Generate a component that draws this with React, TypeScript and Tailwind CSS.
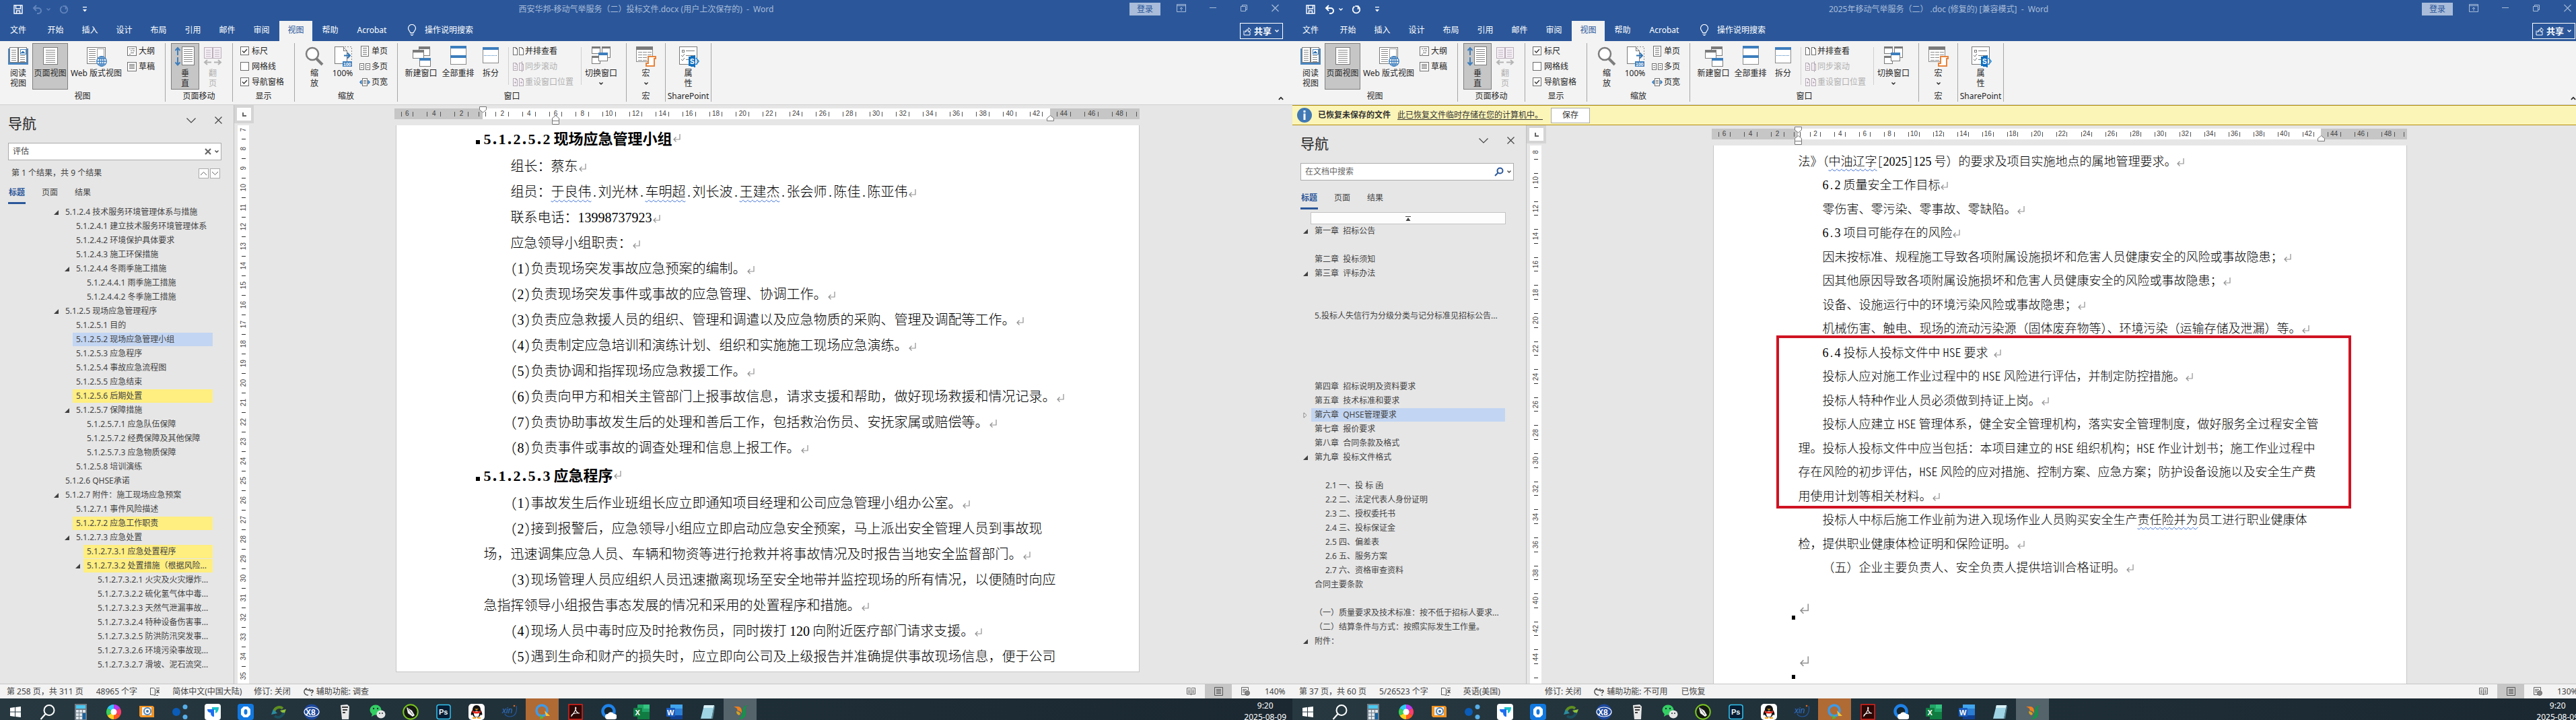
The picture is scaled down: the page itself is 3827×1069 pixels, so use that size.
import type { ReactNode } from "react";
import { clsx } from "clsx";

/* ---------- shared types ---------- */

type TreeItem = {
  label: string;
  level: number;
  state?: "open" | "closed";
  mark?: "selected" | "hit";
};

// text between two "~" carries the proofing underline
type DocLine = {
  text: string;
  kind?: "heading" | "flush";
  end?: boolean;
};

/* ---------- data ---------- */

const leftTree: TreeItem[] = [
  { label: "5.1.2.4 技术服务环境管理体系与措施", level: 0, state: "open" },
  { label: "5.1.2.4.1 建立技术服务环境管理体系", level: 1 },
  { label: "5.1.2.4.2 环境保护具体要求", level: 1 },
  { label: "5.1.2.4.3 施工环保措施", level: 1 },
  { label: "5.1.2.4.4 冬雨季施工措施", level: 1, state: "open" },
  { label: "5.1.2.4.4.1 雨季施工措施", level: 2 },
  { label: "5.1.2.4.4.2 冬季施工措施", level: 2 },
  { label: "5.1.2.5 现场应急管理程序", level: 0, state: "open" },
  { label: "5.1.2.5.1 目的", level: 1 },
  { label: "5.1.2.5.2 现场应急管理小组", level: 1, mark: "selected" },
  { label: "5.1.2.5.3 应急程序", level: 1 },
  { label: "5.1.2.5.4 事故应急流程图", level: 1 },
  { label: "5.1.2.5.5 应急结束", level: 1 },
  { label: "5.1.2.5.6 后期处置", level: 1, mark: "hit" },
  { label: "5.1.2.5.7 保障措施", level: 1, state: "open" },
  { label: "5.1.2.5.7.1 应急队伍保障", level: 2 },
  { label: "5.1.2.5.7.2 经费保障及其他保障", level: 2 },
  { label: "5.1.2.5.7.3 应急物质保障", level: 2 },
  { label: "5.1.2.5.8 培训演练", level: 1 },
  { label: "5.1.2.6 QHSE承诺", level: 0 },
  { label: "5.1.2.7 附件：施工现场应急预案", level: 0, state: "open" },
  { label: "5.1.2.7.1 事件风险描述", level: 1 },
  { label: "5.1.2.7.2 应急工作职责", level: 1, mark: "hit" },
  { label: "5.1.2.7.3 应急处置", level: 1, state: "open" },
  { label: "5.1.2.7.3.1 应急处置程序", level: 2, mark: "hit" },
  { label: "5.1.2.7.3.2 处置措施（根据风险...", level: 2, state: "open", mark: "hit" },
  { label: "5.1.2.7.3.2.1 火灾及火灾爆炸...", level: 3 },
  { label: "5.1.2.7.3.2.2 硫化氢气体中毒...", level: 3 },
  { label: "5.1.2.7.3.2.3 天然气泄漏事故...", level: 3 },
  { label: "5.1.2.7.3.2.4 特种设备伤害事...", level: 3 },
  { label: "5.1.2.7.3.2.5 防洪防汛突发事...", level: 3 },
  { label: "5.1.2.7.3.2.6 环境污染事故现...", level: 3 },
  { label: "5.1.2.7.3.2.7 滑坡、泥石流突...", level: 3 },
];

const blank: TreeItem = { label: "", level: 0 };

const rightTree: TreeItem[] = [
  { label: "第一章  招标公告", level: 0, state: "open" },
  blank,
  { label: "第二章  投标须知", level: 0 },
  { label: "第三章  评标办法", level: 0, state: "open" },
  blank,
  blank,
  { label: "5.投标人失信行为分级分类与记分标准见招标公告...", level: 0 },
  blank,
  blank,
  blank,
  blank,
  { label: "第四章  招标说明及资料要求", level: 0 },
  { label: "第五章  技术标准和要求", level: 0 },
  { label: "第六章  QHSE管理要求", level: 0, state: "closed", mark: "selected" },
  { label: "第七章  报价要求", level: 0 },
  { label: "第八章  合同条款及格式", level: 0 },
  { label: "第九章  投标文件格式", level: 0, state: "open" },
  blank,
  { label: "2.1 一、投 标 函", level: 1 },
  { label: "2.2 二、法定代表人身份证明", level: 1 },
  { label: "2.3 二、授权委托书", level: 1 },
  { label: "2.4 三、投标保证金", level: 1 },
  { label: "2.5 四、偏差表", level: 1 },
  { label: "2.6 五、服务方案", level: 1 },
  { label: "2.7 六、资格审查资料", level: 1 },
  { label: "合同主要条款", level: 0 },
  blank,
  { label: "（一）质量要求及技术标准：按不低于招标人要求...", level: 0 },
  { label: "（二）结算条件与方式：按照实际发生工作量。", level: 0 },
  { label: "附件：", level: 0, state: "open" },
];

const leftLines: DocLine[] = [
  { text: "5.1.2.5.2 现场应急管理小组", kind: "heading", end: true },
  { text: "组长：蔡东", end: true },
  { text: "组员：~于良伟~.刘光林.~车明超~.刘长波.~王建杰~.张会师.陈佳.陈亚伟", end: true },
  { text: "联系电话：13998737923", end: true },
  { text: "应急领导小组职责：", end: true },
  { text: "(1)负责现场突发事故应急预案的编制。", end: true },
  { text: "(2)负责现场突发事件或事故的应急管理、协调工作。", end: true },
  { text: "(3)负责应急救援人员的组织、管理和调遣以及应急物质的采购、管理及调配等工作。", end: true },
  { text: "(4)负责制定应急培训和演练计划、组织和实施施工现场应急演练。", end: true },
  { text: "(5)负责协调和指挥现场应急救援工作。", end: true },
  { text: "(6)负责向甲方和相关主管部门上报事故信息，请求支援和帮助，做好现场救援和情况记录。", end: true },
  { text: "(7)负责协助事故发生后的处理和善后工作，包括救治伤员、安抚家属或赔偿等。", end: true },
  { text: "(8)负责事件或事故的调查处理和信息上报工作。", end: true },
  { text: "5.1.2.5.3 应急程序", kind: "heading", end: true },
  { text: "(1)事故发生后作业班组长应立即通知项目经理和公司应急管理小组办公室。", end: true },
  { text: "(2)接到报警后，应急领导小组应立即启动应急安全预案，马上派出安全管理人员到事故现" },
  { text: "场，迅速调集应急人员、车辆和物资等进行抢救并将事故情况及时报告当地安全监督部门。", kind: "flush", end: true },
  { text: "(3)现场管理人员应组织人员迅速撤离现场至安全地带并监控现场的所有情况，以便随时向应" },
  { text: "急指挥领导小组报告事态发展的情况和采用的处置程序和措施。", kind: "flush", end: true },
  { text: "(4)现场人员中毒时应及时抢救伤员，同时拨打 120 向附近医疗部门请求支援。", end: true },
  { text: "(5)遇到生命和财产的损失时，应立即向公司及上级报告并准确提供事故现场信息，便于公司" },
];

const rightLines: DocLine[] = [
  { text: "法》（~中油辽字~[2025]125 号）的要求及项目实施地点的属地管理要求。", kind: "flush", end: true },
  { text: "6.2 质量安全工作目标", end: true },
  { text: "零伤害、零污染、零事故、零缺陷。", end: true },
  { text: "6.3 项目可能存在的风险", end: true },
  { text: "因未按标准、规程施工导致各项附属设施损坏和危害人员健康安全的风险或事故隐患；", end: true },
  { text: "因其他原因导致各项附属设施损坏和危害人员健康安全的风险或事故隐患；", end: true },
  { text: "设备、设施运行中的环境污染风险或事故隐患；", end: true },
  { text: "机械伤害、触电、现场的流动污染源（固体废弃物等）、环境污染（运输存储及泄漏）等。", end: true },
  { text: "6.4 投标人投标文件中 HSE 要求  ", end: true },
  { text: "投标人应对施工作业过程中的 HSE 风险进行评估，并制定防控措施。", end: true },
  { text: "投标人特种作业人员必须做到持证上岗。", end: true },
  { text: "投标人应建立 HSE 管理体系，健全安全管理机构，落实安全管理制度，做好服务全过程安全管" },
  { text: "理。投标人投标文件中应当包括：本项目建立的 HSE 组织机构；HSE 作业计划书；施工作业过程中", kind: "flush" },
  { text: "存在风险的初步评估，HSE 风险的应对措施、控制方案、应急方案；防护设备设施以及安全生产费", kind: "flush" },
  { text: "用使用计划等相关材料。", kind: "flush", end: true },
  { text: "投标人中标后施工作业前为进入现场作业人员购买安全生产~责任险并为~员工进行职业健康体" },
  { text: "检，提供职业健康体检证明和保险证明。", kind: "flush", end: true },
  { text: "（五）企业主要负责人、安全负责人提供培训合格证明。", end: true },
];

/* ---------- small glyphs ---------- */

function Caret({ className }: { className?: string }) {
  return (
    <svg viewBox="0 0 8 8" className={clsx("shrink-0", className || "size-2")} fill="none" stroke="currentColor" strokeWidth="1.4">
      <path d="M1.5 2.5 4 5l2.500-2.500" />
    </svg>
  );
}

function ReturnMark({ className }: { className?: string }) {
  return (
    <svg
      viewBox="0 0 12 16"
      className={clsx("inline-block align-middle text-[#909090]", className || "h-4 w-3")}
      fill="none"
      stroke="currentColor"
      strokeWidth="1.200"
    >
      <path d="M11 2v8H2M5.500 6.500 2 10l3.500 3.500" />
    </svg>
  );
}

function LineRows({ x, y, w, n, gap, color = "#8a8a8a" }: { x: number; y: number; w: number; n: number; gap: number; color?: string }) {
  return (
    <>
      {Array.from({ length: n }, (_, i) => (
        <path key={i} d={`M${x} ${y + i * gap + 0.5}h${w}`} stroke={color} strokeWidth="1" />
      ))}
    </>
  );
}

/* ---------- ribbon icons, 32px ---------- */

function Big({ children }: { children: ReactNode }) {
  return (
    <svg viewBox="0 0 32 32" className="size-8 shrink-0" fill="none" shapeRendering="crispEdges">
      {children}
    </svg>
  );
}

const ReadIcon = () => (
  <Big>
    <path d="M1 4h4v20h22V4h4v24H1z" fill="#4a86c0" />
    <path d="M3.500 2.500h12v22h-12zM16.500 2.500h12v22h-12z" fill="#fff" stroke="#7a7a7a" />
    <LineRows x={6} y={6} w={7} n={6} gap={3} />
    <LineRows x={19} y={14} w={7} n={4} gap={3} />
    <path d="M19 5h8v7h-8z" fill="#fff" stroke="#4a86c0" />
    <path d="m20 11 3-4 3 4z" fill="#2f6fb0" />
  </Big>
);

const PageIcon = () => (
  <Big>
    <path d="M5.500 2.500h21v25h-21z" fill="#fff" stroke="#7a7a7a" />
    <LineRows x={9} y={6} w={14} n={7} gap={3} />
  </Big>
);

const WebIcon = () => (
  <Big>
    <path d="M2.500 2.500h27v24h-27z" fill="#fff" stroke="#7a7a7a" />
    <LineRows x={5} y={5} w={10} n={7} gap={3} />
    <path d="M17.500 4.500h10v13h-10z" fill="#fff" stroke="#9a9a9a" />
    <g shapeRendering="auto" stroke="#3d7ebd" strokeWidth="1.300">
      <circle cx="24" cy="23" r="7.300" fill="#fff" />
      <ellipse cx="24" cy="23" rx="3.300" ry="7.300" />
      <path d="M17 23h14M18 19h12M18 27h12M24 16v14" />
    </g>
  </Big>
);

const VerticalIcon = () => (
  <Big>
    <g shapeRendering="auto" stroke="#3d7ebd" strokeWidth="2">
      <path d="M5 3v11M1.500 7 5 3l3.500 4M5 17v11M1.500 24.500 5 28.500l3.500-4" />
    </g>
    <path d="M11.500 1.500h18v27h-18z" fill="#fff" stroke="#7a7a7a" />
    <LineRows x={14} y={5} w={13} n={7} gap={3} />
  </Big>
);

const FlipIcon = () => (
  <Big>
    <path d="M3.500 2.500h12v16h-12zM16.500 2.500h12v16h-12z" fill="#f5eef5" stroke="#b9aeb9" />
    <LineRows x={6} y={6} w={7} n={4} gap={3} color="#c3b9c3" />
    <LineRows x={19} y={6} w={7} n={4} gap={3} color="#c3b9c3" />
    <g shapeRendering="auto" stroke="#b5b5b5" strokeWidth="2">
      <path d="M4 24.500h10M8 21l-4 3.500L8 28M18 24.500h10M24 21l4 3.500-4 3.500" />
    </g>
  </Big>
);

const ZoomIcon = () => (
  <Big>
    <g shapeRendering="auto">
      <circle cx="13" cy="12" r="9" fill="#fff" stroke="#7d7d7d" strokeWidth="2.500" />
      <path d="m19 19 9 9" stroke="#7d7d7d" strokeWidth="4" />
    </g>
  </Big>
);

const HundredIcon = () => (
  <Big>
    <path d="M4 1.500h13l5 6v19H4z" fill="#fff" stroke="#7a7a7a" />
    <path d="M17 1.500v6h5" stroke="#7a7a7a" />
    <path d="M19 1.500h10.500v22" stroke="#8a8a8a" strokeDasharray="2 2" />
    <path d="M18 14.500h9M23 10.500l4 4-4 4" stroke="#2f75b5" strokeWidth="2" shapeRendering="auto" />
    <path d="M16 23h14v8H16z" fill="#3d7ebd" />
    <text x="17" y="30" fontSize="7" fill="#fff" fontWeight="700" fontFamily="Liberation Sans">
      100
    </text>
  </Big>
);

const NewWindowIcon = () => (
  <Big>
    <path d="M12.500 1.500h16v13h-16z" fill="#fff" stroke="#7a7a7a" />
    <path d="M12 1h17v4H12z" fill="#7a7a7a" />
    <path d="M3.500 6.500h16v12h-16z" fill="#fff" stroke="#7a7a7a" />
    <path d="M3 6h17v4H3z" fill="#7a7a7a" />
    <path d="M13.500 18.500h16v12h-16z" fill="#fff" stroke="#7a7a7a" />
    <path d="M13 18h17v4H13z" fill="#3d7ebd" />
  </Big>
);

const ArrangeIcon = () => (
  <Big>
    <path d="M4.500 1.500h23v26h-23z" fill="#fff" stroke="#8a8a8a" />
    <path d="M4 0h24v4H4zM4 14h24v4H4z" fill="#3d7ebd" />
  </Big>
);

const SplitIcon = () => (
  <Big>
    <path d="M4.500 2.500h23v23h-23z" fill="#fff" stroke="#8a8a8a" />
    <path d="M4 2h24v4H4z" fill="#3d7ebd" />
    <path d="M6 14.500h20" stroke="#3d7ebd" strokeDasharray="1 1" />
  </Big>
);

const SwitchIcon = () => (
  <Big>
    <path d="M2.500 1.500h12v10h-12zM17.500 1.500h12v16h-12z" fill="#fff" stroke="#7a7a7a" />
    <path d="M2 1h13v3H2zM17 1h13v3H17z" fill="#7a7a7a" />
    <path d="M2.500 15.500h12v11h-12z" fill="#fff" stroke="#7a7a7a" />
    <path d="M2 15h13v3H2z" fill="#7a7a7a" />
    <path d="M12.500 10.500h13v12h-13z" fill="#fff" stroke="#7a7a7a" />
    <path d="M12 10h14v4H12z" fill="#3d7ebd" />
  </Big>
);

const MacroIcon = () => (
  <Big>
    <path d="M1.500 1.500h24v22h-24z" fill="#fff" stroke="#8a8a8a" />
    <path d="M1 1h25v5H1z" fill="#7a7a7a" />
    <g strokeDasharray="6 1">
      <LineRows x={4} y={9} w={20} n={4} gap={4} />
    </g>
    <path d="M19 16h11v3h-2v11H16v-4h3z" fill="#fff" stroke="#e8833a" strokeWidth="2" shapeRendering="auto" />
  </Big>
);

const PropsIcon = () => (
  <Big>
    <path d="M2.500 1.500h26v26h-26z" fill="#fff" stroke="#7a7a7a" />
    <path d="M6 6h3v3H6zM12 7.500h13M12 14.500h13M12 20.500h5" stroke="#7a7a7a" />
    <path d="m5 14 2 2 3-4M5 20l2 2 3-4" stroke="#7a7a7a" shapeRendering="auto" />
    <path d="M16 16l10-2v18l-10-2z" fill="#0f6fc0" />
    <path d="M27 18l4 5-4 5" stroke="#2f8fd8" strokeWidth="2" shapeRendering="auto" />
    <text x="18" y="27" fontSize="10" fill="#fff" fontWeight="700" fontFamily="Liberation Sans">
      S
    </text>
  </Big>
);

/* ---------- ribbon icons, 16px ---------- */

function Small({ children, faded }: { children: ReactNode; faded?: boolean }) {
  return (
    <svg viewBox="0 0 16 16" className={clsx("size-4 shrink-0", faded ? "text-[#b5adb5]" : "text-[#6f6f6f]")} fill="none" stroke="currentColor" shapeRendering="crispEdges">
      {children}
    </svg>
  );
}

const OutlineIcon = () => (
  <Small>
    <path d="M1.500 1.500h13v13h-13z" fill="#fff" />
    <path d="M4 4.500h2M7 4.500h5M6 7.500h2M9 7.500h3M6 10.500h5M4 12.500h2" />
  </Small>
);
const DraftIcon = () => (
  <Small>
    <path d="M1.500 1.500h13v13h-13z" fill="#fff" />
    <path d="M4 4.500h8M4 6.500h8M4 8.500h8M4 10.500h8" />
  </Small>
);
const OnePageIcon = () => (
  <Small>
    <path d="M2.500.5h11v15h-11z" fill="#fff" />
    <path d="M5 3.500h6M5 6.500h6M5 9.500h6M5 12.500h6" />
  </Small>
);
const MultiPageIcon = () => (
  <Small>
    <path d="M.5 3.500h6v9h-6zM9.500 3.500h6v9h-6z" fill="#fff" />
    <path d="M2 6.500h3M2 9.500h3M11 6.500h3M11 9.500h3" />
  </Small>
);
const PageWidthIcon = () => (
  <Small>
    <path d="M4.500 2.500h7v11h-7z" fill="#fff" />
    <path d="M6 5.500h4M6 7.500h4M6 9.500h4" />
    <path d="M3 5 .5 8 3 11zM13 5l2.500 3-2.500 3z" fill="#3d7ebd" stroke="#3d7ebd" shapeRendering="auto" />
  </Small>
);
const SideBySideIcon = ({ variant = 0 }: { variant?: number }) => (
  <Small faded={variant > 0}>
    <path d="M.5 2.500h4l2 2v9h-6zM9.500 2.500h4l2 2v9h-6z" fill={variant ? "#f5eef5" : "#fff"} />
    <path d="M4.500 2.500v2h2M13.500 2.500v2h2" />
    {variant === 1 && <path d="M13.500 0v16M2 7.500h3M2 10.500h3" />}
    {variant === 2 && <path d="M2 8.500h3M11 8.500h3M3.500 7v3M12.500 7v3" />}
  </Small>
);

/* ---------- title bar and tabs ---------- */

const tabNames = ["开始", "插入", "设计", "布局", "引用", "邮件", "审阅", "视图", "帮助"];

function TitleBar({ title, canUndo }: { title: string; canUndo: boolean }) {
  const historyColor = canUndo ? "text-white" : "text-[#6385bd]";
  return (
    <div className="grid h-[31px] shrink-0 grid-cols-[1fr_auto_1fr] bg-[#2b579a] text-[#a9bcd9]">
      <div className="flex items-center pb-1 pl-5">
        <button aria-label="保存" className="text-white">
          <svg viewBox="0 0 14 14" className="size-3.5" fill="none" stroke="currentColor" strokeWidth="1.400">
            <path d="M1 1h12v12H1zM3.500 1v5h7V1M4.500 13V9h5v4" />
          </svg>
        </button>
        <button aria-label="撤消" className={clsx("ml-3.5 flex items-center gap-1", historyColor)}>
          <svg viewBox="0 0 16 16" className="size-4" fill="none" stroke="currentColor" strokeWidth="2">
            <path d="M6 2 2 6l4 4M2.500 6H9a4 4 0 0 1 0 8H7" />
          </svg>
          <Caret />
        </button>
        <button aria-label="恢复" className={clsx("ml-3", historyColor)}>
          <svg viewBox="0 0 16 16" className="size-3.5" fill="none" stroke="currentColor" strokeWidth="2">
            <path d="M5 3a6 6 0 1 0 6 0M11 8V2.500H6" />
          </svg>
        </button>
        <button aria-label="自定义快速访问工具栏" className="ml-5 text-white">
          <svg viewBox="0 0 8 8" className="size-2" fill="currentColor">
            <path d="M1 0h6v1.300H1zM1 4h6L4 7.500z" />
          </svg>
        </button>
      </div>
      <div className="whitespace-pre pt-1.5 text-[12px] leading-4">{title}</div>
      <div className="flex items-start justify-end">
        <button className="mt-1 h-[19px] w-[46px] bg-[#a9bcd9] text-[12px] leading-[19px] text-[#2b579a]">登录</button>
        <button aria-label="功能区显示选项" className="ml-6 mt-1.5">
          <svg viewBox="0 0 14 12" className="h-3 w-3.5" fill="none" stroke="currentColor">
            <path d="M.5.5h13v11H.5zM.5 2.500h13M7 10V5M5 7l2-2 2 2" />
          </svg>
        </button>
        <button aria-label="最小化" className="ml-[35px] mt-1.5">
          <svg viewBox="0 0 10 12" className="h-3 w-2.5" stroke="currentColor">
            <path d="M0 5.500h10" />
          </svg>
        </button>
        <button aria-label="还原" className="ml-9 mt-1.5">
          <svg viewBox="0 0 11 12" className="h-3 w-[11px]" fill="none" stroke="currentColor">
            <path d="M.5 3.500h7v7h-7zM2.500 3V1.500h7v7H8" />
          </svg>
        </button>
        <button aria-label="关闭" className="ml-[35px] mr-5 mt-1.5">
          <svg viewBox="0 0 11 12" className="h-3 w-[11px]" stroke="currentColor" strokeWidth="1.200">
            <path d="m.5 1 10 10M10.500 1l-10 10" />
          </svg>
        </button>
      </div>
    </div>
  );
}

function TabBar() {
  return (
    <div className="flex h-[30px] shrink-0 bg-[#2b579a] text-[12px] leading-[27px] text-white">
      <button className="mr-[3px] w-[54px] pb-[3px]">文件</button>
      {tabNames.map((name) => (
        <button
          key={name}
          className={clsx("pb-[3px]", name === "视图" ? "mx-px w-[49px] bg-[#f3f3f3] text-[#2b579a]" : "w-[51px]")}
        >
          {name}
        </button>
      ))}
      <button className="w-[73px] pb-[3px]">Acrobat</button>
      <button className="ml-4 flex items-center gap-3 pb-[3px]">
        <svg viewBox="0 0 14 18" className="h-[18px] w-3.5" fill="none" stroke="currentColor" strokeWidth="1.200">
          <path d="M4.500 12.500c0-2-3-3-3-6.500a5.500 5.500 0 0 1 11 0c0 3.500-3 4.500-3 6.500zM4.500 14.500h5M5.500 16.500h3" />
        </svg>
        操作说明搜索
      </button>
      <button className="ml-auto mr-3.5 mt-[3px] flex h-6 w-16 items-center justify-center gap-1 border border-white text-[13px] font-bold leading-5">
        <svg viewBox="0 0 12 14" className="h-3.5 w-3" fill="none" stroke="currentColor">
          <path d="M1 6.500v6.500h9V8M3 9c0-3 2-4.500 5-4.500V2l3.500 3.500L8 9V6.500C6 6.500 4 7 3 9z" />
        </svg>
        共享
        <Caret />
      </button>
    </div>
  );
}

/* ---------- ribbon ---------- */

function Group({ label, width, children }: { label: string; width: string; children: ReactNode }) {
  return (
    <div className={clsx("flex h-[87px] shrink-0 flex-col border-r border-[#a6a6a6]", width)}>
      <div className="flex h-[72px] items-start">{children}</div>
      <div className="whitespace-nowrap text-center leading-[17px]">{label}</div>
    </div>
  );
}

function BigButton({
  icon,
  lines,
  width,
  active,
  disabled,
  caret,
}: {
  icon: ReactNode;
  lines: string[];
  width: string;
  active?: boolean;
  disabled?: boolean;
  caret?: boolean;
}) {
  return (
    <button
      disabled={disabled}
      className={clsx(
        "flex h-[69px] shrink-0 flex-col items-center whitespace-nowrap border pt-[3px] leading-[15px]",
        width,
        active ? "border-[#7f7f7f] bg-[#c6c6c6]" : "border-transparent",
        disabled && "text-[#b1b1b1]",
      )}
    >
      {icon}
      <span className="mt-px">{lines[0]}</span>
      {lines[1] && <span>{lines[1]}</span>}
      {caret && <Caret className="mt-1 size-2" />}
    </button>
  );
}

function SmallButton({ icon, children, disabled }: { icon: ReactNode; children: ReactNode; disabled?: boolean }) {
  return (
    <button disabled={disabled} className={clsx("flex h-[23px] items-center gap-0.5 whitespace-nowrap", disabled && "text-[#b1b1b1]")}>
      {icon}
      {children}
    </button>
  );
}

function Check({ label, on }: { label: string; on?: boolean }) {
  return (
    <label className="flex h-[23px] items-center gap-1 whitespace-nowrap">
      <span className="grid size-[13px]">
        <input
          type="checkbox"
          defaultChecked={on}
          className="peer col-start-1 row-start-1 size-[13px] appearance-none border border-[#6b6b6b] bg-white"
        />
        <svg viewBox="0 0 13 13" className="pointer-events-none col-start-1 row-start-1 hidden size-[13px] peer-checked:block" fill="none" stroke="#333" strokeWidth="1.300">
          <path d="m3 6.500 2.500 2.500L10 4" />
        </svg>
      </span>
      {label}
    </label>
  );
}

function Ribbon() {
  return (
    <div className="flex h-[95px] shrink-0 border-b border-[#d0d0d0] bg-[#f3f3f3] pt-[3px] text-[12px] text-[#262626]">
      <Group label="视图" width="w-[246px]">
        <BigButton icon={<ReadIcon />} lines={["阅读", "视图"]} width="ml-1.5 w-[42px]" />
        <BigButton icon={<PageIcon />} lines={["页面视图"]} width="w-[53px]" active />
        <BigButton icon={<WebIcon />} lines={["Web 版式视图"]} width="w-[84px]" />
        <div className="pl-[3px]">
          <SmallButton icon={<OutlineIcon />}>大纲</SmallButton>
          <SmallButton icon={<DraftIcon />}>草稿</SmallButton>
        </div>
      </Group>
      <Group label="页面移动" width="w-[100px]">
        <BigButton icon={<VerticalIcon />} lines={["垂", "直"]} width="ml-2 w-[42px]" active />
        <BigButton icon={<FlipIcon />} lines={["翻", "页"]} width="w-10" disabled />
      </Group>
      <Group label="显示" width="w-[92px]">
        <div className="pl-[11px]">
          <Check label="标尺" on />
          <Check label="网格线" />
          <Check label="导航窗格" on />
        </div>
      </Group>
      <Group label="缩放" width="w-[153px]">
        <BigButton icon={<ZoomIcon />} lines={["缩", "放"]} width="ml-2 w-[42px]" />
        <BigButton icon={<HundredIcon />} lines={["100%"]} width="w-[42px]" />
        <div className="pl-1">
          <SmallButton icon={<OnePageIcon />}>单页</SmallButton>
          <SmallButton icon={<MultiPageIcon />}>多页</SmallButton>
          <SmallButton icon={<PageWidthIcon />}>页宽</SmallButton>
        </div>
      </Group>
      <Group label="窗口" width="w-[340px]">
        <BigButton icon={<NewWindowIcon />} lines={["新建窗口"]} width="ml-[7px] w-[55px]" />
        <BigButton icon={<ArrangeIcon />} lines={["全部重排"]} width="w-[55px]" />
        <BigButton icon={<SplitIcon />} lines={["拆分"]} width="w-[42px]" />
        <div className="ml-[5px] mt-1.5 h-14 border-l border-[#d0d0d0]" />
        <div className="pl-1.5">
          <SmallButton icon={<SideBySideIcon />}>并排查看</SmallButton>
          <SmallButton icon={<SideBySideIcon variant={1} />} disabled>
            同步滚动
          </SmallButton>
          <SmallButton icon={<SideBySideIcon variant={2} />} disabled>
            重设窗口位置
          </SmallButton>
        </div>
        <div className="ml-[11px] mt-1.5 h-14 border-l border-[#d0d0d0]" />
        <BigButton icon={<SwitchIcon />} lines={["切换窗口"]} width="w-[58px]" caret />
      </Group>
      <Group label="宏" width="w-[58px]">
        <BigButton icon={<MacroIcon />} lines={["宏"]} width="mx-auto w-10" caret />
      </Group>
      <Group label="SharePoint" width="w-[68px]">
        <BigButton icon={<PropsIcon />} lines={["属", "性"]} width="mx-auto w-10" />
      </Group>
      <button aria-label="折叠功能区" className="ml-auto mr-3 self-end pb-1">
        <Caret className="size-2.5 rotate-180" />
      </button>
    </div>
  );
}

/* ---------- navigation pane ---------- */

const indents = ["ml-0", "ml-4", "ml-8", "ml-12"];

function Tree({ items, className }: { items: TreeItem[]; className: string }) {
  return (
    <ul className={clsx("flex flex-col gap-px text-[12px] leading-5", className)}>
      {items.map((item, i) => (
        <li key={i} className={clsx("flex h-5 items-center", indents[item.level])}>
          <span className="w-4 shrink-0">
            {item.state === "open" && (
              <svg viewBox="0 0 7 7" className="ml-1 size-[7px]" fill="#404040">
                <path d="M7 0v7H0z" />
              </svg>
            )}
            {item.state === "closed" && (
              <svg viewBox="0 0 6 9" className="ml-1 h-[9px] w-1.5" fill="#fff" stroke="#808080">
                <path d="M1 .8v7.400l4-3.700z" />
              </svg>
            )}
          </span>
          <a
            href="#"
            className={clsx(
              "h-5 grow whitespace-pre pl-[5px]",
              item.mark === "selected" && "bg-[#c2d5f2]",
              item.mark === "hit" && "bg-[#ffee80]",
            )}
          >
            {item.label}
          </a>
        </li>
      ))}
    </ul>
  );
}

function NavPane({ query, tree, treeClass }: { query?: string; tree: TreeItem[]; treeClass: string }) {
  return (
    <aside className="flex w-[348px] shrink-0 flex-col overflow-hidden border-r border-[#c0c0c0] text-[#444]">
      <div className="flex items-start pl-3 pt-[13px]">
        <h2 className="text-[21px] leading-7 text-[#262626]">导航</h2>
        <button aria-label="窗格选项" className="ml-auto mt-1.5">
          <svg viewBox="0 0 14 8" className="h-2 w-3.5" fill="none" stroke="#444" strokeWidth="1.200">
            <path d="m.5.5 6.500 6.500L13.500.5" />
          </svg>
        </button>
        <button aria-label="关闭窗格" className="ml-7 mr-[17px] mt-1">
          <svg viewBox="0 0 11 11" className="size-[11px]" stroke="#444" strokeWidth="1.200">
            <path d="m.5.5 10 10M10.500.5l-10 10" />
          </svg>
        </button>
      </div>
      <div className="ml-3 mr-[18px] mt-[15px] flex h-[26px] shrink-0 items-center border border-[#ababab] bg-white pr-0.5">
        <input
          aria-label="搜索文档"
          defaultValue={query}
          placeholder="在文档中搜索"
          className="min-w-0 grow pl-1.5 text-[12px] leading-5 outline-none placeholder:text-[#666]"
        />
        {query ? (
          <button aria-label="清除">
            <svg viewBox="0 0 10 10" className="size-2.5" stroke="#666" strokeWidth="2.200">
              <path d="m1 1 8 8M9 1 1 9" />
            </svg>
          </button>
        ) : (
          <button aria-label="搜索">
            <svg viewBox="0 0 14 14" className="size-3.5" fill="none" stroke="#2b579a" strokeWidth="2">
              <circle cx="8.500" cy="5.500" r="4" />
              <path d="M5.500 8.500 1 13" />
            </svg>
          </button>
        )}
        <Caret className="ml-1 size-2" />
      </div>
      {query && (
        <div className="ml-[17px] mr-5 mt-[11px] flex h-4 items-center gap-0.5 text-[12px] leading-4">
          <span className="mr-auto">第 1 个结果，共 9 个结果</span>
          <button aria-label="上一个" className="flex size-[15px] items-center justify-center border border-[#ababab] bg-[#fdfdfd]">
            <svg viewBox="0 0 11 7" className="h-[7px] w-[11px]" fill="none" stroke="#666">
              <path d="m1 6 4.500-4.500L10 6" />
            </svg>
          </button>
          <button aria-label="下一个" className="flex size-[15px] items-center justify-center border border-[#ababab] bg-[#fdfdfd]">
            <svg viewBox="0 0 11 7" className="h-[7px] w-[11px]" fill="none" stroke="#666">
              <path d="m1 1 4.500 4.500L10 1" />
            </svg>
          </button>
        </div>
      )}
      <div className={clsx("ml-3 flex gap-[23px] text-[12px] leading-5", query ? "mt-[11px]" : "mt-4")}>
        <button className="h-[27px] w-[26px] border-b-[3px] border-[#2b579a] pb-1 font-bold text-[#2b579a]">标题</button>
        <button className="h-[27px] w-[26px] pb-[7px]">页面</button>
        <button className="h-[27px] w-[26px] pb-[7px]">结果</button>
      </div>
      {!query && (
        <button aria-label="跳转到开头" className="ml-[27px] mr-[30px] mt-1 flex h-[18px] shrink-0 items-center justify-center border border-[#c3c3c3] bg-[#fdfdfd]">
          <svg viewBox="0 0 8 7" className="h-[7px] w-2" fill="#444">
            <path d="M0 0h8v1H0zM4 2l3.500 5h-7z" />
          </svg>
        </button>
      )}
      <Tree items={tree} className={treeClass} />
    </aside>
  );
}

/* ---------- rulers ---------- */

function RulerCell({ label, grow = 1, side }: { label?: number; grow?: number; side?: boolean }) {
  return (
    <div className={clsx("flex min-w-0 basis-0 items-center", side ? "justify-center" : "justify-between px-2.5")} style={{ flexGrow: grow }}>
      {side ? (
        <span className="h-[7px] border-l border-[#555]" />
      ) : (
        <>
          <span className="h-[7px] border-l border-[#555]" />
          <span>{label}</span>
          <span className="h-[7px] border-l border-[#555]" />
        </>
      )}
    </div>
  );
}

const mainNumbers = Array.from({ length: 21 }, (_, i) => (i + 1) * 2);

function Indent({ className, kind }: { className: string; kind: "down" | "up" | "hanging" }) {
  return (
    <svg viewBox="0 0 11 14" className={clsx("absolute h-3.5 w-[11px]", className)} fill="#fff" stroke="#777">
      {kind === "down" && <path d="M.5.5h10V5l-5 4-5-4z" />}
      {kind === "up" && <path d="M.5 8.500h10V4.500L5.500.5l-5 4z" />}
      {kind === "hanging" && <path d="M.5 8.500h10V4.500L5.500.5l-5 4zM.5 8.500h10v5H.5z" />}
    </svg>
  );
}

function TopRuler({ leftWidth, rightWidth, hanging }: { leftWidth: string; rightWidth: string; hanging: boolean }) {
  return (
    <div className="flex h-4 shrink-0 font-['Liberation_Sans',sans-serif] text-[10px] leading-4 text-[#444]">
      <div className={clsx("flex bg-[#c6c6c6]", leftWidth)}>
        <RulerCell label={6} grow={0.9} />
        <RulerCell label={4} />
        <RulerCell label={2} />
        <RulerCell grow={0.5} side />
      </div>
      <div className="relative flex grow bg-white">
        <RulerCell grow={0.5} side />
        {mainNumbers.map((n) => (
          <RulerCell key={n} label={n} />
        ))}
        <Indent kind="down" className="-left-[5px] -top-[3px]" />
        <Indent kind="hanging" className={hanging ? "-left-[5px] top-2.5" : "left-[103px] top-2.5"} />
        <Indent kind="up" className="-right-[6px] top-2.5" />
      </div>
      <div className={clsx("flex bg-[#c6c6c6]", rightWidth)}>
        <RulerCell label={44} />
        <RulerCell label={46} />
        <RulerCell label={48} />
        <RulerCell grow={0.4} side />
      </div>
    </div>
  );
}

function RulerNumber({ n }: { n: number }) {
  return <span className="rotate-180 leading-[17px] [writing-mode:vertical-rl]">{n}</span>;
}

function Tick() {
  return <span className="h-px w-1.5 shrink-0 bg-[#333]" />;
}

const oneStep = Array.from({ length: 28 }, (_, i) => 8 + i);
const twoStep = Array.from({ length: 18 }, (_, i) => 10 + i * 2);

function SideRuler({ wide }: { wide: boolean }) {
  return (
    <div className="flex w-[29px] shrink-0 flex-col">
      <div className="flex h-[27px] shrink-0 items-center justify-center bg-[#d4d4d4]">
        <div className="flex h-[19px] w-[21px] items-center justify-center bg-[#fdfdfd]">
          <svg viewBox="0 0 6 6" className="size-1.5" fill="none" stroke="#666" strokeWidth="2">
            <path d="M1 0v5h5" />
          </svg>
        </div>
      </div>
      <div className="ml-[5px] mt-[3px] flex w-[17px] grow basis-0 flex-col overflow-hidden bg-white font-['Liberation_Sans',sans-serif] text-[10px] text-[#444]">
        {wide ? (
          <>
            <div className="flex h-[31px] shrink-0 flex-col items-center justify-between pb-2.5 pt-[7px]">
              <RulerNumber n={8} />
              <Tick />
            </div>
            {twoStep.map((n) => (
              <div key={n} className="flex min-h-0 grow basis-0 flex-col items-center justify-between py-2.5">
                <Tick />
                <RulerNumber n={n} />
                <Tick />
              </div>
            ))}
            <div className="flex h-[19px] shrink-0 flex-col items-center pt-2.5">
              <Tick />
            </div>
          </>
        ) : (
          <>
            <div className="flex h-[21px] shrink-0 flex-col items-center justify-between pt-1">
              <RulerNumber n={7} />
              <Tick />
            </div>
            {oneStep.map((n) => (
              <div key={n} className="flex h-[29px] shrink-0 flex-col items-center">
                <span className="flex grow items-center">
                  <RulerNumber n={n} />
                </span>
                <Tick />
              </div>
            ))}
          </>
        )}
      </div>
    </div>
  );
}

/* ---------- document ---------- */

// digits and latin runs take half an em per character, like the body font's own
function DocText({ text }: { text: string }) {
  return text.split("~").map((part, i) => (
    <span key={i} className={i % 2 ? "underline decoration-[#3b6fd8] decoration-wavy decoration-1 underline-offset-4" : undefined}>
      {part.split(/([0-9]+|[!-/:-~]+)/).map((run, j) =>
        j % 2 ? (
          <span key={j} className={/[0-9]/.test(run) ? "font-['Liberation_Serif',serif]" : "[font-feature-settings:'hwid']"}>
            {run}
          </span>
        ) : (
          run
        ),
      )}
    </span>
  ));
}

const docFont = "font-['Noto_Sans_CJK_SC',sans-serif] font-light";

function LeftDocument() {
  return (
    <main className="flex min-w-0 grow flex-col items-center overflow-hidden pr-[19px] pt-[5px]">
      <div className="flex w-[1107px] flex-col">
        <TopRuler leftWidth="w-[131px]" rightWidth="w-[133px]" hanging={false} />
        <article
          className={clsx(
            "ml-0.5 mt-[9px] whitespace-pre border-x border-b border-[#c6c6c6] bg-white pb-1 pl-[130px] text-[20px] leading-[38px] text-black",
            docFont,
          )}
        >
          {leftLines.map((line, i) =>
            line.kind === "heading" ? (
              <h3 key={i} className="-ml-3 flex h-[41px] items-center pb-[3px] text-[22px] font-bold leading-8 not-first:h-11 not-first:pt-[3px]">
                <span className="mr-1.5 mt-3 size-1.5 bg-black" />
                <span>
                  <DocText text={line.text} />
                </span>
                <ReturnMark />
              </h3>
            ) : (
              <p key={i} className={clsx("h-[38px]", line.kind !== "flush" && "indent-[40px]")}>
                <DocText text={line.text} />
                {line.end && <ReturnMark />}
              </p>
            ),
          )}
        </article>
      </div>
    </main>
  );
}

function RightDocument() {
  return (
    <main className="flex min-w-0 grow flex-col items-center overflow-hidden pr-[19px] pt-[5px]">
      <div className="flex w-[1033px] grow flex-col">
        <TopRuler leftWidth="w-32" rightWidth="w-32" hanging />
        <article
          className={clsx(
            "relative ml-0.5 mt-[9px] grow whitespace-pre border-x border-[#c6c6c6] bg-white pl-[126px] pt-[5px] text-[18px] leading-[35px] text-black",
            docFont,
          )}
        >
          {rightLines.map((line, i) => (
            <p key={i} className={clsx("h-[35px] even:h-9", line.kind !== "flush" && "indent-[36px]")}>
              <DocText text={line.text} />
              {line.end && <ReturnMark />}
            </p>
          ))}
          <div className="flex flex-col items-start pt-[34px]">
            <ReturnMark className="h-5 w-4" />
            <span className="-ml-2.5 h-1.5 w-[5px] bg-black" />
            <ReturnMark className="mt-[52px] h-5 w-4" />
            <span className="-ml-2.5 mt-2.5 h-1.5 w-[5px] bg-black" />
          </div>
          {/* reviewer's frame round section 6.4 */}
          <div className="absolute left-[93px] top-[282px] h-[257px] w-[854px] border-4 border-[#cf1322]" />
        </article>
      </div>
    </main>
  );
}

/* ---------- status bar ---------- */

function StatusBar({ page, words, language, reviewGap, access, extra, zoom }: {
  page: string;
  words: string;
  language: string;
  reviewGap: string;
  access: string;
  extra?: string;
  zoom: string;
}) {
  return (
    <footer className="flex h-[22px] shrink-0 items-center whitespace-nowrap border-t border-[#c6c6c6] bg-[#f3f3f3] pl-[10px] text-[12px] text-[#444]">
      <span>{page}</span>
      <span className="ml-[19px]">{words}</span>
      <svg viewBox="0 0 15 14" className="ml-[19px] h-3.5 w-[15px]" fill="none" stroke="#555">
        <path d="M7.500 12.500c-2-1-4-1-7-1v-10h5l2 1.500zM7.500 3V12.500M9 1.500h5M9 12.500h3" />
        <path d="m9.500 4 4 5M13.500 4l-4 5" strokeWidth="1.400" />
      </svg>
      <span className="ml-[18px]">{language}</span>
      <span className={reviewGap}>修订: 关闭</span>
      <svg viewBox="0 0 16 14" className="ml-[19px] mr-[3px] h-3.5 w-4" fill="none" stroke="#444" strokeWidth="1.300">
        <path d="M5 2a5 5 0 0 0 2 10M9 2v3M3 3.500 9 5" />
        <path d="M10 6.500c0-3 5-2 4 0-.5 1.200-2 1.500-2 3M12 11.500v1.500" strokeWidth="1.600" />
      </svg>
      <span>{access}</span>
      {extra && <span className="ml-5">{extra}</span>}
      <button aria-label="阅读视图" className="ml-auto mr-3.5">
        <svg viewBox="0 0 13 13" className="size-[13px]" fill="none" stroke="#666">
          <path d="M.5 1.500h5l1 1 1-1h5v9h-5l-1 1.500-1-1.500h-5zM6.500 2.500v9M2 4.500h3M2 6.500h3M2 8.500h3M8 4.500h3M8 6.500h3M8 8.500h3" />
        </svg>
      </button>
      <button aria-label="页面视图" className="flex h-full w-10 items-center justify-center bg-[#c6c6c6]">
        <svg viewBox="0 0 13 13" className="size-[13px]" fill="none" stroke="#555">
          <path d="M.5.5h12v12H.5zM3 3.500h7M3 5.500h7M3 7.500h7M3 9.500h7" />
        </svg>
      </button>
      <button aria-label="Web 版式视图" className="ml-3.5">
        <svg viewBox="0 0 13 13" className="size-[13px]" fill="none" stroke="#666">
          <path d="M6 11.500H.5v-11h10V5M2 3.500h6M2 5.500h4M2 7.500h3" />
          <circle cx="9" cy="9" r="3.500" fill="#888" />
        </svg>
      </button>
      <span className="ml-[22px] w-[41px]">{zoom}</span>
    </footer>
  );
}

/* ---------- taskbar ---------- */

function App24({ children }: { children: ReactNode }) {
  return (
    <svg viewBox="0 0 24 24" className="size-6" fill="none">
      {children}
    </svg>
  );
}

const iconFont = "Liberation Sans, sans-serif";

const taskIcons: { name: string; tint?: string; icon: ReactNode }[] = [
  {
    name: "搜索",
    icon: (
      <App24>
        <circle cx="14" cy="9.500" r="7.500" stroke="#fff" strokeWidth="2" />
        <path d="m8.500 15-7 8" stroke="#fff" strokeWidth="2" />
      </App24>
    ),
  },
  {
    name: "计算器",
    icon: (
      <App24>
        <path d="M3 0h18v24H3z" fill="#6f7d88" />
        <path d="M5 2h14v5H5z" fill="#4cc8f0" />
        <path d="M5 9h4v4H5zM10 9h4v4h-4zM15 9h4v4h-4zM5 14h4v4H5zM10 14h4v4h-4zM5 19h4v4H5zM10 19h4v4h-4z" fill="#dfe5ea" />
        <path d="M15 14h4v9h-4z" fill="#1264a8" />
      </App24>
    ),
  },
  {
    name: "色彩",
    icon: (
      <App24>
        <path d="M12 1a11 11 0 0 1 9.500 5.500L12 12z" fill="#b83af0" />
        <path d="M21.500 6.500a11 11 0 0 1 0 11L12 12z" fill="#ff3c6e" />
        <path d="M21.500 17.500A11 11 0 0 1 12 23V12z" fill="#ff5a1f" />
        <path d="M12 23a11 11 0 0 1-9.500-5.500L12 12z" fill="#ffd21f" />
        <path d="M2.500 17.500a11 11 0 0 1 0-11L12 12z" fill="#3ad05a" />
        <path d="M2.500 6.500A11 11 0 0 1 12 1v11z" fill="#2fc8f5" />
        <circle cx="12" cy="12" r="4.500" fill="#fff" />
      </App24>
    ),
  },
  {
    name: "截图",
    icon: (
      <App24>
        <path d="M1 3h20l2 2v15H3l-2-2z" fill="#f29422" />
        <path d="M5 5h14v12H5z" fill="#e8eef2" />
        <circle cx="13" cy="11" r="5" fill="#fff" stroke="#5a86b0" strokeWidth="2" />
        <circle cx="13" cy="11" r="2" fill="#3c6ea0" />
      </App24>
    ),
  },
  {
    name: "共享",
    icon: (
      <App24>
        <circle cx="7" cy="12" r="6" fill="#0a5cb8" />
        <circle cx="20" cy="4.500" r="3.500" fill="#56aee8" />
        <circle cx="20" cy="19.500" r="3.500" fill="#56aee8" />
      </App24>
    ),
  },
  {
    name: "文档",
    icon: (
      <App24>
        <rect width="24" height="24" rx="4" fill="#fff" />
        <path d="M11 5h10c0 5-2 8-5 9v-5h-5z" fill="#19c3c8" />
        <path d="M4 8h10v11c-3 0-5-2-5-6-3 0-5-2-5-5z" fill="#1e6ff0" />
      </App24>
    ),
  },
  {
    name: "云盘",
    icon: (
      <App24>
        <rect width="24" height="24" rx="4" fill="#1178e0" />
        <path d="M9 4h6l4 4v8l-4 4H9l-4-4V8z" fill="#fff" />
        <ellipse cx="12" cy="12" rx="2.500" ry="4" fill="#1178e0" />
      </App24>
    ),
  },
  {
    name: "同步",
    icon: (
      <App24>
        <path d="M5 12a8 8 0 0 1 13-5" stroke="#5f8f20" strokeWidth="4" />
        <path d="m23 8-9 2 6 6z" fill="#8fc43a" />
        <path d="M19 13a8 8 0 0 1-13 5" stroke="#1b4f5c" strokeWidth="4" />
        <path d="m1 16 9-2-6-6z" fill="#2a8ca0" />
      </App24>
    ),
  },
  {
    name: "XF8",
    icon: (
      <App24>
        <circle cx="12" cy="12" r="11.500" fill="#1c479c" />
        <ellipse cx="12" cy="12" rx="11" ry="7" stroke="#fff" strokeWidth="1.200" />
        <text x="3" y="17" fontSize="12" fontWeight="700" fill="#fff" fontFamily={iconFont}>
          X8
        </text>
      </App24>
    ),
  },
  {
    name: "主机",
    icon: (
      <App24>
        <path d="m6 2 10-1 3 3-1 19H8z" fill="#e8e8e8" />
        <path d="M8 4h9v2H8zM9 8h7v2H9zM9 12h4v2H9z" fill="#3a3a3a" />
      </App24>
    ),
  },
  {
    name: "微信",
    icon: (
      <App24>
        <ellipse cx="9" cy="9" rx="8.500" ry="7.500" fill="#33cf63" />
        <path d="m4 14-1 5 5-3z" fill="#33cf63" />
        <ellipse cx="17" cy="15.500" rx="6.500" ry="6" fill="#e6e6e6" />
        <g fill="#1f3038">
          <circle cx="6" cy="7" r="1.200" />
          <circle cx="12" cy="7" r="1.200" />
          <circle cx="15" cy="14" r="1" />
          <circle cx="19" cy="14" r="1" />
        </g>
      </App24>
    ),
  },
  {
    name: "CorelDRAW",
    icon: (
      <App24>
        <circle cx="12" cy="12" r="10.800" fill="#151a12" stroke="#79c51f" strokeWidth="2" />
        <path d="m6 5 8 5 4 7-3 2-7-5z" fill="#f4f4f4" />
        <path d="m8 7 7 9" stroke="#555" />
      </App24>
    ),
  },
  {
    name: "Photoshop",
    icon: (
      <App24>
        <rect x="2" y="1.500" width="20" height="21" rx="3" fill="#061d33" stroke="#32c3f0" strokeWidth="1.500" />
        <text x="5" y="16" fontSize="11" fontWeight="700" fill="#e8f7ff" fontFamily={iconFont}>
          Ps
        </text>
      </App24>
    ),
  },
  {
    name: "QQ",
    icon: (
      <App24>
        <rect width="24" height="24" rx="5" fill="#fff" />
        <path d="M12 2c-4 0-6 3-6 7-2 3-3 6-2 8l2-1c1 3 3 4 6 4s5-1 6-4l2 1c1-2 0-5-2-8 0-4-2-7-6-7z" fill="#111" />
        <ellipse cx="12" cy="15" rx="4" ry="4.500" fill="#fff" />
        <path d="M6 10c4 2 8 2 12 0v3c-4 2-8 2-12 0z" fill="#e52a20" />
        <path d="M9 7.500h6l-3 2z" fill="#f9a61a" />
        <path d="M6 20h5v2H6zM13 20h5v2h-5z" fill="#f9a61a" />
      </App24>
    ),
  },
  {
    name: "xin",
    icon: (
      <App24>
        <text x="1" y="14" fontSize="12" fontStyle="italic" fill="#2f74cc" fontFamily={iconFont}>
          xin
        </text>
        <path d="M22 3c2 9-2 16-9 16-4 0-7-2-8-4" stroke="#2358a0" strokeWidth="1.200" />
        <circle cx="19" cy="3" r="1.300" fill="#e06a20" />
      </App24>
    ),
  },
  {
    name: "QQ 浏览器更新",
    tint: "bg-[#b06a34]",
    icon: (
      <App24>
        <circle cx="11" cy="10" r="8" stroke="#3d9bea" strokeWidth="3.500" />
        <path d="m15 10 8 8h-6z" fill="#f7c531" />
        <path d="m9 16 5 5-6 2z" fill="#5cb531" />
      </App24>
    ),
  },
  {
    name: "Acrobat",
    icon: (
      <App24>
        <path d="M2 1h20v22H2z" fill="#2b0806" stroke="#e32119" strokeWidth="1.500" />
        <path d="M12 5c2 0 0 6-6 13 0-3 5-5 12-4-4 0-7-5-6-9z" stroke="#fff" strokeWidth="1.200" />
      </App24>
    ),
  },
  {
    name: "QQ 浏览器",
    icon: (
      <App24>
        <circle cx="12" cy="11" r="8.500" stroke="#1e82e8" strokeWidth="4.500" fill="#15232b" />
        <path d="M11 23a4 4 0 0 1 0-8 5 5 0 0 1 9 0 4 4 0 0 1 1 8z" fill="#fff" />
      </App24>
    ),
  },
  {
    name: "Excel",
    icon: (
      <App24>
        <rect x="6" y="1" width="18" height="22" rx="1" fill="#21a366" />
        <path d="M6 12h18v11H6z" fill="#107c41" />
        <path d="M15 1h9v6h-9z" fill="#33c481" />
        <rect y="6" width="13" height="13" rx="1" fill="#107c41" />
        <text x="2.500" y="16.500" fontSize="11" fontWeight="700" fill="#fff" fontFamily={iconFont}>
          X
        </text>
      </App24>
    ),
  },
  {
    name: "Word",
    icon: (
      <App24>
        <rect x="6" y="1" width="18" height="22" rx="1" fill="#2b7cd3" />
        <path d="M6 1h18v6H6z" fill="#41a5ee" />
        <path d="M6 17h18v6H6z" fill="#103f91" />
        <rect y="6" width="13" height="13" rx="1" fill="#185abd" />
        <text x="1" y="16.500" fontSize="11" fontWeight="700" fill="#fff" fontFamily={iconFont}>
          W
        </text>
      </App24>
    ),
  },
  {
    name: "记事本",
    icon: (
      <App24>
        <path d="M7 2h15l-4 20H2z" fill="#9fd4e4" />
        <path d="M7 2h15l-1 4H6z" fill="#d9f1f6" />
        <path d="m22 2-4 20h2l3-18z" fill="#5a8794" />
      </App24>
    ),
  },
  {
    name: "截屏工具",
    tint: "bg-[#55636b]",
    icon: (
      <App24>
        <path d="M2 4h6c4 0 6 3 6 8v2c-2-3-4-4-7-4 2-2-1-4-5-6z" fill="#ee7f1d" />
        <path d="M6 11c3 0 5 1 6 4l-2 2c-3-1-4-3-4-6z" fill="#d3a321" />
        <path d="M23 2c-5 3-3 7-3 12 0 6-4 9-11 9 4-3 6-6 6-11 0-6 3-10 8-10z" fill="#16924a" />
      </App24>
    ),
  },
];

function Taskbar() {
  return (
    <div className="h-8 shrink-0 overflow-hidden bg-linear-to-r from-[#273840] via-[#1f2f38] to-[#1b2831]">
      <div className="flex h-10 items-stretch">
        <button aria-label="开始" className="flex w-[46px] items-center justify-center">
          <svg viewBox="0 0 16 16" className="size-4" fill="#fff">
            <path d="m0 2 7-1v6.500H0zM8 .9 16 0v7.500H8zM0 8.500h7V15l-7-1zM8 8.500h8V16l-8-.9z" />
          </svg>
        </button>
        {taskIcons.map((item) => (
          <button key={item.name} aria-label={item.name} className={clsx("flex w-[49px] items-center justify-center", item.tint)}>
            {item.icon}
          </button>
        ))}
        <div className="ml-auto mr-[9px] pt-0.5 text-center text-[12px] leading-[17px] text-white">
          <div>9:20</div>
          <div>2025-08-09</div>
        </div>
      </div>
    </div>
  );
}

/* ---------- windows ---------- */

function RecoveryBar() {
  return (
    <div className="flex h-[30px] shrink-0 items-center border-y border-[#b38f0c] bg-[#fcf5b8] pl-[7px] text-[12px] text-[#333]">
      <svg viewBox="0 0 22 22" className="size-[22px]">
        <circle cx="11" cy="11" r="11" fill="#4179b4" />
        <path d="M9.500 4h3v3h-3zM9.500 8.500h3V18h-3z" fill="#fff" />
      </svg>
      <b className="ml-[9px]">已恢复未保存的文件</b>
      <a href="#" className="ml-[10px] underline underline-offset-2">
        此已恢复文件临时存储在您的计算机中。
      </a>
      <button className="ml-3 h-[23px] w-[58px] border border-[#ababab] bg-white leading-5">保存</button>
    </div>
  );
}

function DesktopHalf({ children }: { children: ReactNode }) {
  return <section className="flex min-w-0 flex-col overflow-hidden bg-[#e6e6e6]">{children}</section>;
}

export default function App() {
  return (
    <div className="h-screen overflow-hidden bg-[#e6e6e6] font-['Noto_Sans','Noto_Sans_CJK_SC',sans-serif]">
      {/* the second screen runs a little past the right edge */}
      <div className="-mr-[13px] grid h-full grid-cols-2">
        <DesktopHalf>
          <TitleBar title="西安华邦-移动气举服务（二）投标文件.docx (用户上次保存的)  -  Word" canUndo={false} />
          <TabBar />
          <Ribbon />
          <div className="flex min-h-0 grow">
            <NavPane query="评估" tree={leftTree} treeClass="ml-[76px] mr-[31px] mt-0.5" />
            <SideRuler wide={false} />
            <LeftDocument />
          </div>
          <StatusBar
            page="第 258 页，共 311 页"
            words="48965 个字"
            language="简体中文(中国大陆)"
            reviewGap="ml-[18px]"
            access="辅助功能: 调查"
            zoom="140%"
          />
          <Taskbar />
        </DesktopHalf>
        <DesktopHalf>
          <TitleBar title="2025年移动气举服务（二） .doc (修复的) [兼容模式]  -  Word" canUndo />
          <TabBar />
          <Ribbon />
          <RecoveryBar />
          <div className="flex min-h-0 grow">
            <NavPane tree={rightTree} treeClass="ml-3 mr-[31px] mt-0" />
            <SideRuler wide />
            <RightDocument />
          </div>
          <StatusBar
            page="第 37 页，共 60 页"
            words="5/26523 个字"
            language="英语(美国)"
            reviewGap="ml-[66px]"
            access="辅助功能: 不可用"
            extra="已恢复"
            zoom="130%"
          />
          <Taskbar />
        </DesktopHalf>
      </div>
    </div>
  );
}
